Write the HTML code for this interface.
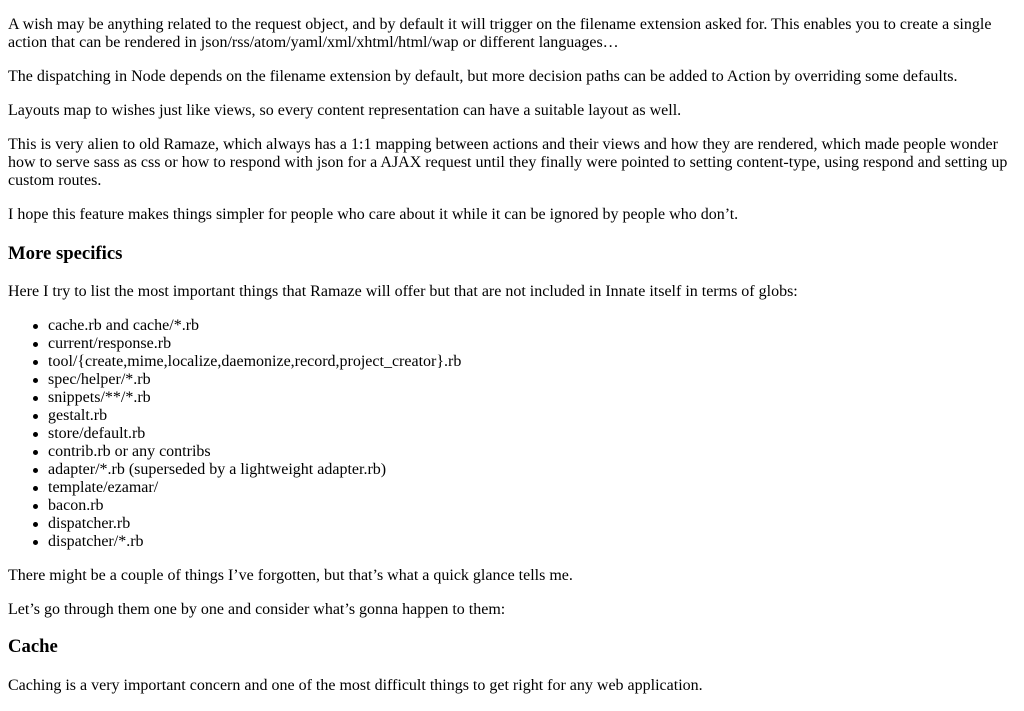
<!DOCTYPE html>
<html><head><meta charset="utf-8"><style>
body{margin:8px;font-family:"Liberation Serif",serif;font-size:16px;color:#000;background:#fff;}
ul{list-style:none;padding-left:40px;}
li{position:relative;}
li::before{content:"";position:absolute;left:-15px;top:7px;width:5px;height:5px;border-radius:50%;background:#000;}
</style></head><body>
<p>A wish may be anything related to the request object, and by default it will trigger on the filename extension asked for. This enables you to create a single action that can be rendered in json/rss/atom/yaml/xml/xhtml/html/wap or different languages…</p>
<p>The dispatching in Node depends on the filename extension by default, but more decision paths can be added to Action by overriding some defaults.</p>
<p>Layouts map to wishes just like views, so every content representation can have a suitable layout as well.</p>
<p>This is very alien to old Ramaze, which always has a 1:1 mapping between actions and their views and how they are rendered, which made people wonder how to serve sass as css or how to respond with json for a AJAX request until they finally were pointed to setting content-type, using respond and setting up custom routes.</p>
<p>I hope this feature makes things simpler for people who care about it while it can be ignored by people who don’t.</p>
<h3>More specifics</h3>
<p>Here I try to list the most important things that Ramaze will offer but that are not included in Innate itself in terms of globs:</p>
<ul>
<li>cache.rb and cache/*.rb</li>
<li>current/response.rb</li>
<li>tool/{create,mime,localize,daemonize,record,project_creator}.rb</li>
<li>spec/helper/*.rb</li>
<li>snippets/**/*.rb</li>
<li>gestalt.rb</li>
<li>store/default.rb</li>
<li>contrib.rb or any contribs</li>
<li>adapter/*.rb (superseded by a lightweight adapter.rb)</li>
<li>template/ezamar/</li>
<li>bacon.rb</li>
<li>dispatcher.rb</li>
<li>dispatcher/*.rb</li>
</ul>
<p>There might be a couple of things I’ve forgotten, but that’s what a quick glance tells me.</p>
<p>Let’s go through them one by one and consider what’s gonna happen to them:</p>
<h3 style="margin-top:17px">Cache</h3>
<p style="margin-top:17px">Caching is a very important concern and one of the most difficult things to get right for any web application.</p>
</body></html>
